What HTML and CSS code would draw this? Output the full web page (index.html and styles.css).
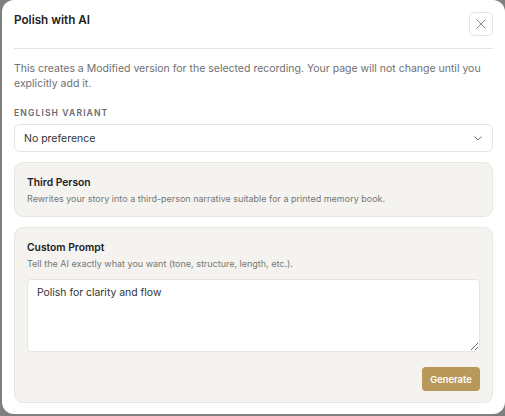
FILE: index.html
```html
<!DOCTYPE html>
<html>
<head>
<meta charset="utf-8">
<link rel="stylesheet" href="styles.css">
</head>
<body>
<div class="dialog">
  <div class="header">
    <h2 class="title">Polish with AI</h2>
    <button class="close" aria-label="Close">
      <svg width="10" height="10" viewBox="0 0 10 10"><path d="M0.5 0.5L9.5 9.5M9.5 0.5L0.5 9.5" stroke="#8a8a8a" stroke-width="1" fill="none"/></svg>
    </button>
  </div>
  <div class="divider"></div>
  <p class="intro">This creates a Modified version for the selected recording. Your page will not change until you explicitly add it.</p>
  <div class="label">ENGLISH VARIANT</div>
  <div class="select">
    <span>No preference</span>
    <svg width="8" height="5" viewBox="0 0 8 5"><path d="M0.5 0.5L4 4L7.5 0.5" stroke="#777" stroke-width="1" fill="none"/></svg>
  </div>
  <div class="card">
    <div class="card-title">Third Person</div>
    <div class="card-desc">Rewrites your story into a third-person narrative suitable for a printed memory book.</div>
  </div>
  <div class="card custom">
    <div class="card-title">Custom Prompt</div>
    <div class="card-desc">Tell the AI exactly what you want (tone, structure, length, etc.).</div>
    <textarea class="prompt">Polish for clarity and flow</textarea>
    <div class="actions"><button class="generate">Generate</button></div>
  </div>
</div>
</body>
</html>
```
FILE: styles.css
```css
* { box-sizing: border-box; }
html, body { margin: 0; height: 100%; }
body {
  background: #7f7f7f;
  font-family: Inter, "Noto Sans", sans-serif;
  overflow: hidden;
}
.dialog {
  margin-left: 2px;
  width: 503px;
  height: 414px;
  background: #fff;
  border-radius: 12px;
  padding: 12px 12px 0 12px;
  display: flex;
  flex-direction: column;
}
.header {
  display: flex;
  justify-content: space-between;
  align-items: flex-start;
  height: 24px;
}
.title {
  margin: 1px 0 0 0;
  font-size: 11.7px;
  line-height: 14px;
  font-weight: 600;
  color: #222;
}
.close {
  width: 24px;
  height: 24px;
  border: 1px solid #e6e4de;
  border-radius: 5px;
  background: #fff;
  display: flex;
  align-items: center;
  justify-content: center;
  padding: 0;
}
.divider {
  margin-top: 12px;
  height: 1px;
  background: #e6e4de;
}
.intro {
  margin: 12px 0 0 0;
  font-size: 10.5px;
  line-height: 15px;
  color: #707070;
}
.label {
  margin-top: 16px;
  font-size: 8.6px;
  line-height: 12px;
  font-weight: 600;
  letter-spacing: 1.1px;
  color: #6a6a6a;
}
.select {
  margin-top: 5px;
  height: 28px;
  border: 1px solid #e6e4de;
  border-radius: 6px;
  display: flex;
  align-items: center;
  justify-content: space-between;
  padding: 0 10px 0 9px;
  font-size: 10.5px;
  color: #333;
}
.card {
  margin-top: 10px;
  background: #f4f3ef;
  border: 1px solid #e8e6e0;
  border-radius: 9px;
  padding: 13px 12px 11px 12px;
}
.card-title {
  font-size: 10.3px;
  line-height: 13px;
  font-weight: 600;
  color: #222;
}
.card-desc {
  margin-top: 4px;
  font-size: 9px;
  line-height: 12px;
  color: #777;
}
.prompt {
  display: block;
  margin-top: 9px;
  width: 100%;
  height: 73px;
  border: 1px solid #e6e4de;
  border-radius: 4px;
  background: #fff;
  padding: 6px 9px;
  font-family: Inter, "Noto Sans", sans-serif;
  font-size: 10.4px;
  line-height: 14px;
  color: #333;
  resize: vertical;
  outline: none;
}
.actions {
  display: flex;
  justify-content: flex-end;
  margin-top: 15px;
}
.generate {
  background: #b8995a;
  color: #fff;
  border: none;
  border-radius: 4px;
  width: 58px;
  height: 24px;
  padding: 0;
  font-family: Inter, "Noto Sans", sans-serif;
  font-size: 9.3px;
  font-weight: 600;
}
```
